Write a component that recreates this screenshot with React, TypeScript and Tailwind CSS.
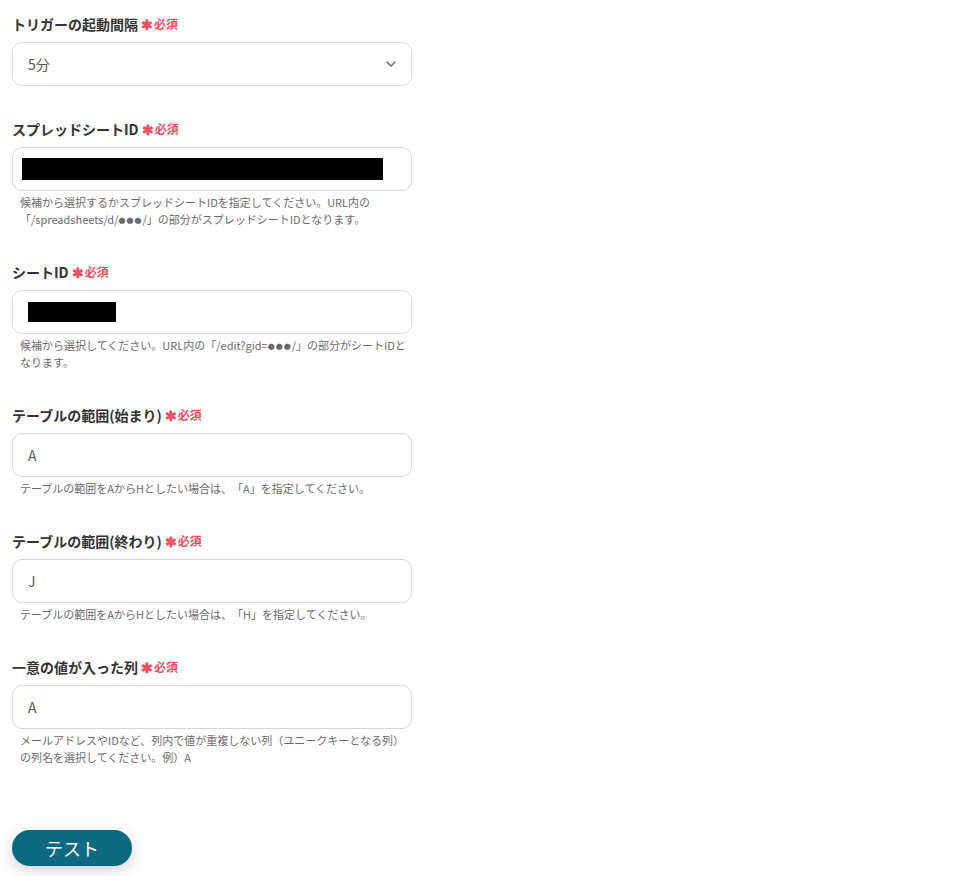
import React from "react";
import { ChevronDown } from "lucide-react";

const font = { fontFamily: '"Noto Sans CJK JP", "Noto Sans", sans-serif' };

function Label({ text }: { text: string }) {
  return (
    <div className="flex items-center h-[20px] leading-[20px] overflow-visible">
      <span className="text-[14px] font-bold text-[#333333]">{text}</span>
      <span className="ml-[3px] text-[14px] font-bold text-[#ef4f63]">✱</span>
      <span className="ml-[1px] text-[12px] font-bold text-[#ef4f63]">必須</span>
    </div>
  );
}

function Dots() {
  return <span className="text-[7px] leading-[7px] align-[1px] tracking-[1px]">●●●</span>;
}

function Help({ lines }: { lines: React.ReactNode[] }) {
  return (
    <div className="mt-[3px] mb-[1px] pl-[8px] text-[11px] leading-[17px] text-[#6b6b6b] [text-spacing-trim:space-all]">
      {lines.map((l, i) => (
        <div key={i} className="h-[17px] whitespace-nowrap">
          {l}
        </div>
      ))}
    </div>
  );
}

function Box({ children }: { children?: React.ReactNode }) {
  return (
    <div className="mt-[8px] h-[44px] w-[400px] rounded-[10px] border border-[#d3d6dd] bg-white flex items-center px-[15px] text-[14px] text-[#5a5a5a]">
      {children}
    </div>
  );
}

export default function App() {
  return (
    <div className="min-h-[876px] w-full bg-white" style={font}>
      <div className="pl-[12px] pt-[14px] flex flex-col gap-[33px]">
        <div>
          <Label text="トリガーの起動間隔" />
          <Box>
            <span className="flex-1">5分</span>
            <ChevronDown size={16} strokeWidth={2.2} className="text-[#666666] -mr-[3px]" />
          </Box>
        </div>
        <div>
          <Label text="スプレッドシートID" />
          <div className="mt-[8px] h-[44px] w-[400px] rounded-[10px] border border-[#d3d6dd] bg-white flex items-center pl-[9px]">
            <div className="h-[22px] w-[361px] bg-black" />
          </div>
          <Help
            lines={[
              "候補から選択するかスプレッドシートIDを指定してください。URL内の",
              <>
                「/spreadsheets/d/<Dots />/」の部分がスプレッドシートIDとなります。
              </>,
            ]}
          />
        </div>
        <div>
          <Label text="シートID" />
          <div className="mt-[8px] h-[44px] w-[400px] rounded-[10px] border border-[#d3d6dd] bg-white flex items-center pl-[15px]">
            <div className="h-[20px] w-[88px] bg-black" />
          </div>
          <Help
            lines={[
              <>
                候補から選択してください。URL内の「/edit?gid=<Dots />/」の部分がシートIDと
              </>,
              "なります。",
            ]}
          />
        </div>
        <div>
          <Label text="テーブルの範囲(始まり)" />
          <Box>A</Box>
          <Help lines={["テーブルの範囲をAからHとしたい場合は、「A」を指定してください。"]} />
        </div>
        <div>
          <Label text="テーブルの範囲(終わり)" />
          <Box>J</Box>
          <Help lines={["テーブルの範囲をAからHとしたい場合は、「H」を指定してください。"]} />
        </div>
        <div>
          <Label text="一意の値が入った列" />
          <Box>A</Box>
          <Help
            lines={[
              "メールアドレスやIDなど、列内で値が重複しない列（ユニークキーとなる列）",
              "の列名を選択してください。例）A",
            ]}
          />
        </div>
      </div>
      <div className="pl-[12px] mt-[63px]">
        <button className="h-[36px] w-[120px] rounded-full bg-[#0c6a80] text-white text-[18px] shadow-[0_4px_14px_rgba(0,0,0,0.18)] flex items-center justify-center">
          テスト
        </button>
      </div>
    </div>
  );
}
